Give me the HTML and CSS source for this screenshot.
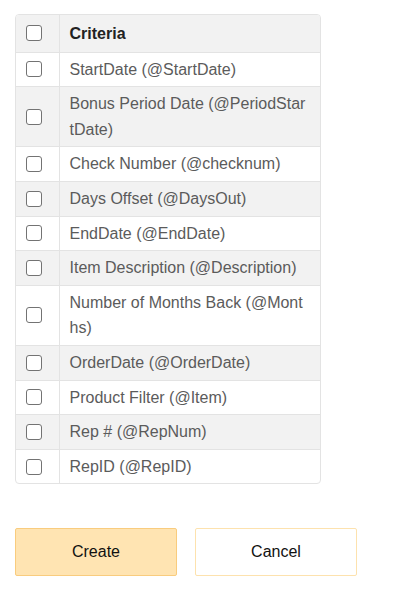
FILE: index.html
```html
<!DOCTYPE html>
<html lang="en">
<head>
    <meta charset="UTF-8">
    <meta name="viewport" content="width=device-width, initial-scale=1.0">
    <title>Criteria</title>
    <link rel="stylesheet" href="styles.css">
</head>
<body>
    <div class="grid-wrap">
        <table class="grid">
            <thead>
                <tr>
                    <th class="check"><input type="checkbox"></th>
                    <th>Criteria</th>
                </tr>
            </thead>
            <tbody>
                <tr><td class="check"><input type="checkbox"></td><td>StartDate (@StartDate)</td></tr>
                <tr><td class="check"><input type="checkbox"></td><td>Bonus Period Date (@PeriodStartDate)</td></tr>
                <tr><td class="check"><input type="checkbox"></td><td>Check Number (@checknum)</td></tr>
                <tr><td class="check"><input type="checkbox"></td><td>Days Offset (@DaysOut)</td></tr>
                <tr><td class="check"><input type="checkbox"></td><td>EndDate (@EndDate)</td></tr>
                <tr><td class="check"><input type="checkbox"></td><td>Item Description (@Description)</td></tr>
                <tr><td class="check"><input type="checkbox"></td><td>Number of Months Back (@Months)</td></tr>
                <tr><td class="check"><input type="checkbox"></td><td>OrderDate (@OrderDate)</td></tr>
                <tr><td class="check"><input type="checkbox"></td><td>Product Filter (@Item)</td></tr>
                <tr><td class="check"><input type="checkbox"></td><td>Rep # (@RepNum)</td></tr>
                <tr><td class="check"><input type="checkbox"></td><td>RepID (@RepID)</td></tr>
            </tbody>
        </table>
    </div>
    <div class="actions">
        <button class="button primary">Create</button>
        <button class="button">Cancel</button>
    </div>
</body>
</html>
```

FILE: styles.css
```css
body {
    font-family: "Liberation Sans", Arial, sans-serif;
    margin: 0;
    padding: 14px 15px;
    background: #fff;
}
.grid-wrap {
    box-sizing: border-box;
    width: 306px;
    border: 1px solid #e3e3e3;
    border-radius: 4px;
    overflow: hidden;
}
.grid {
    width: 100%;
    border-collapse: collapse;
    table-layout: fixed;
}
.grid th, .grid td {
    border-bottom: 1px solid #e3e3e3;
    border-left: 1px solid #e3e3e3;
    text-align: left;
    vertical-align: middle;
    font-size: 16px;
    line-height: 25.6px;
    padding: 4px 12px 4px 10px;
    color: #5b5b5b;
    word-break: break-all;
}
.grid th {
    color: #222;
    font-weight: bold;
    padding: 5.5px 10px;
}
.grid tr > :first-child {
    border-left: none;
}
.grid tbody tr:last-child td {
    border-bottom: none;
}
.grid thead tr, .grid tbody tr:nth-child(even) {
    background: #f2f2f2;
}
.grid .check {
    width: 43px;
    padding: 0 0 0 10px;
    box-sizing: border-box;
}
.check input {
    appearance: none;
    -webkit-appearance: none;
    display: block;
    box-sizing: border-box;
    width: 16px;
    height: 16px;
    margin: 0;
    background: #fff;
    border: 1.5px solid #737373;
    border-radius: 3px;
}
.actions {
    display: flex;
    gap: 18px;
    margin-top: 44px;
}
.button {
    width: 162px;
    height: 48px;
    font-family: "Liberation Sans", Arial, sans-serif;
    font-size: 16px;
    color: #111;
    background: #fff;
    border: 1px solid #fde2ae;
    border-radius: 2px;
    cursor: pointer;
}
.button.primary {
    background: #ffe4b2;
    border-color: #f9cc7e;
}
```
